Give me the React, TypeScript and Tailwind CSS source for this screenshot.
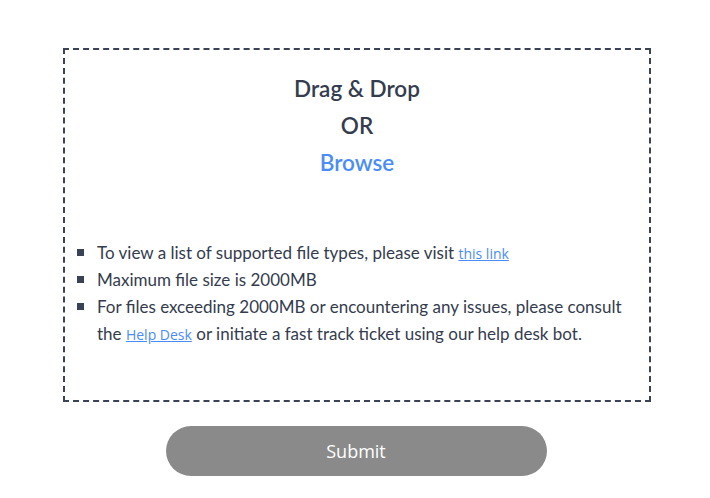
import React from "react";

export default function App() {
  const body = { fontFamily: "Lato, 'Noto Sans', sans-serif" };
  const link = { fontFamily: "'Open Sans', sans-serif" };
  return (
    <div className="w-[710px] h-[498px] bg-white" style={body}>
      <div className="pt-[48px] pl-[63px]">
        <div className="w-[588px] h-[354px] border-2 border-dashed border-[#3a4256] flex flex-col">
          <div className="flex flex-col items-center pt-[20px] text-[22.5px] font-semibold leading-[37px] text-[#343c4e]">
            <div>Drag &amp; Drop</div>
            <div>OR</div>
            <div className="text-[#4a8df8]">Browse</div>
          </div>
          <ul className="mt-[58px] pl-[12px] pr-[8px] text-[17px] leading-[27px] text-[#343c4e]">
            <li className="flex">
              <span className="w-[7px] h-[7px] bg-[#3a4256] mt-[10px] mr-[13px] shrink-0" />
              <span>
                To view a list of supported file types, please visit{" "}
                <a href="#" className="text-[14px] leading-none text-[#4a8df8] underline" style={link}>this link</a>
              </span>
            </li>
            <li className="flex">
              <span className="w-[7px] h-[7px] bg-[#3a4256] mt-[10px] mr-[13px] shrink-0" />
              <span>Maximum file size is 2000MB</span>
            </li>
            <li className="flex">
              <span className="w-[7px] h-[7px] bg-[#3a4256] mt-[10px] mr-[13px] shrink-0" />
              <span>
                For files exceeding 2000MB or encountering any issues, please consult the{" "}
                <a href="#" className="text-[14px] leading-none text-[#4a8df8] underline" style={link}>Help Desk</a>{" "}
                or initiate a fast track ticket using our help desk bot.
              </span>
            </li>
          </ul>
        </div>
      </div>
      <div className="flex justify-center pl-[2px] mt-[24px]">
        <button className="w-[381px] h-[50px] rounded-full bg-[#8a8a8a] text-white text-[18px]" style={link}>
          Submit
        </button>
      </div>
    </div>
  );
}
